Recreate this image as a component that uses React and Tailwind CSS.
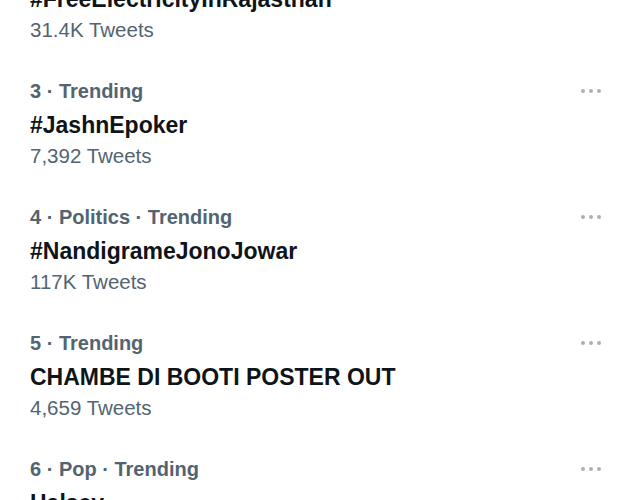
import React from "react";

const trends = [
  { meta: "2 · Trending", title: "#FreeElectricityInRajasthan", count: "31.4K Tweets" },
  { meta: "3 · Trending", title: "#JashnEpoker", count: "7,392 Tweets" },
  { meta: "4 · Politics · Trending", title: "#NandigrameJonoJowar", count: "117K Tweets" },
  { meta: "5 · Trending", title: "CHAMBE DI BOOTI POSTER OUT", count: "4,659 Tweets" },
  { meta: "6 · Pop · Trending", title: "Halsey", count: "12.1K Tweets" },
];

function TrendRow({ trend }) {
  return (
    <li className="flex items-start justify-between pl-[30px] pr-[20px] py-[14px]">
      <div className="flex flex-col">
        <span className="text-[20px] leading-[36px] font-semibold text-[#536471]">
          {trend.meta}
        </span>
        <span className="text-[23px] leading-[32px] font-bold text-[#0f1419]">
          {trend.title}
        </span>
        <span className="text-[20.5px] leading-[30px] text-[#536471]">
          {trend.count}
        </span>
      </div>
      <div className="flex items-center gap-[4px] h-[36px]">
        <span className="w-[4px] h-[4px] rounded-full bg-[#a8b1b9]" />
        <span className="w-[4px] h-[4px] rounded-full bg-[#a8b1b9]" />
        <span className="w-[4px] h-[4px] rounded-full bg-[#a8b1b9]" />
      </div>
    </li>
  );
}

export default function App() {
  return (
    <div
      className="w-[621px] h-[500px] overflow-hidden bg-white"
      style={{ fontFamily: '"Liberation Sans", Arial, sans-serif' }}
    >
      <ul className="-mt-[67px]">
        {trends.map((t) => (
          <TrendRow key={t.meta} trend={t} />
        ))}
      </ul>
    </div>
  );
}
